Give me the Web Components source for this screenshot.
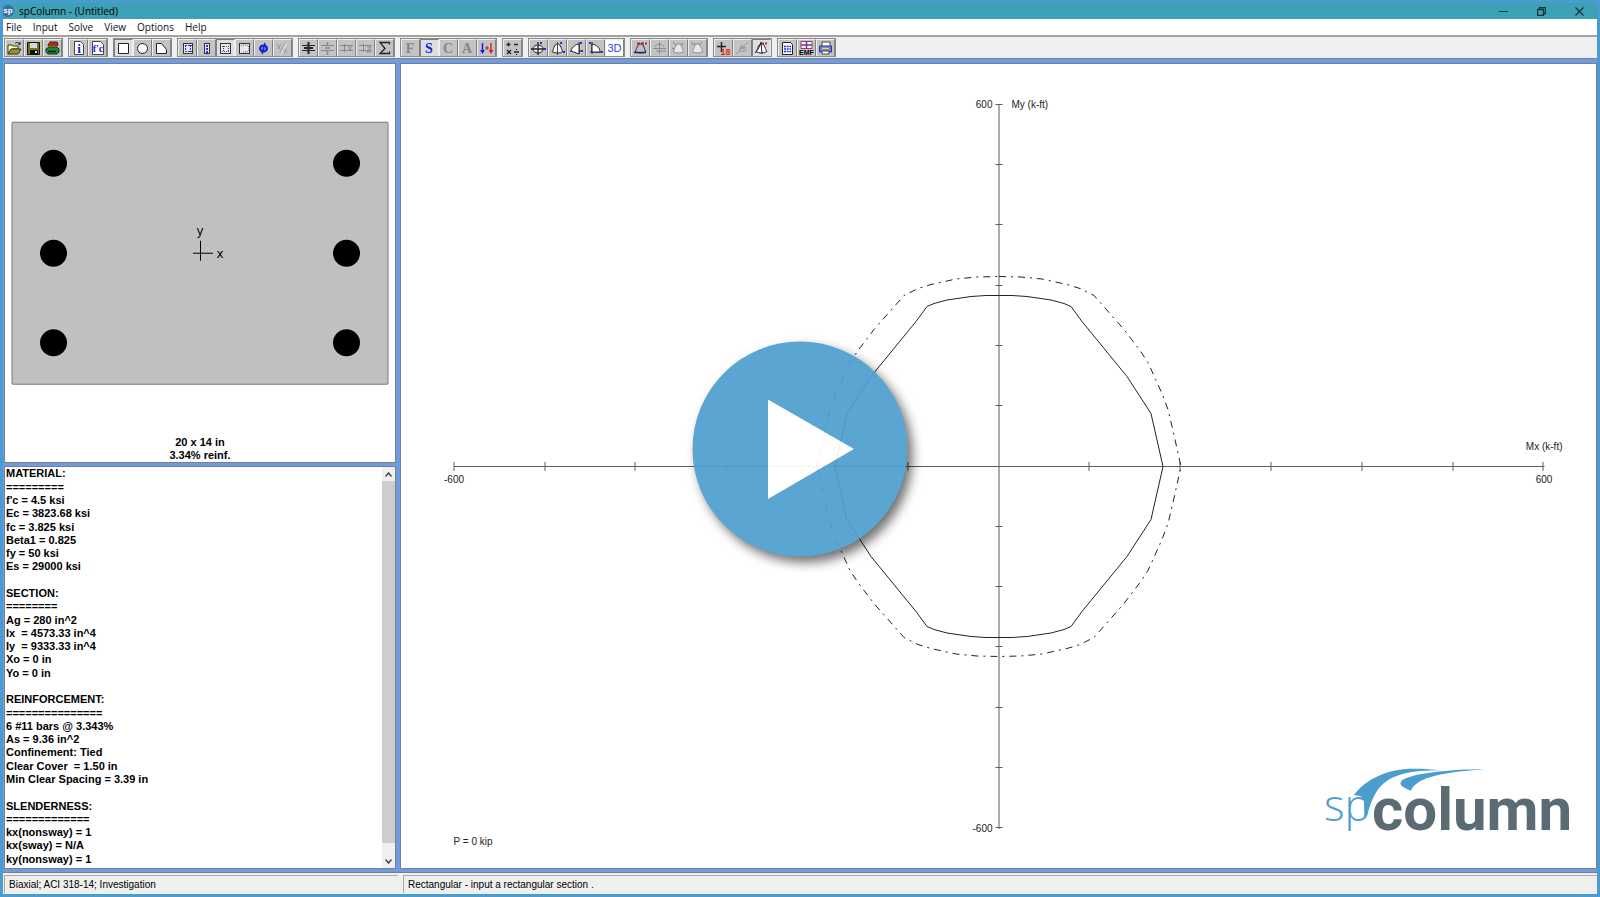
<!DOCTYPE html>
<html lang="en">
<head>
<meta charset="utf-8">
<title>spColumn - (Untitled)</title>
<style>
  html, body { margin: 0; height: 100%; }
  body { font: 11px/13px "Liberation Sans", Arial, sans-serif; color: #000; }
</style>
</head>
<body>
<app-window></app-window>
<script>
function define(name, html, setup) {
  const template = document.createElement('template');
  template.innerHTML = html;
  customElements.define(name, class extends HTMLElement {
    constructor() {
      super();
      this.attachShadow({ mode: 'open' }).append(template.content.cloneNode(true));
    }
    connectedCallback() {
      if (setup && !this.ready) { this.ready = true; setup(this, this.shadowRoot); }
    }
  });
}

/* ---------- toolbar icons, 15 x 14 units each ---------- */
const page = '<path d="M3.500 .5h6l3 3v10h-9z" fill="#fff" stroke="#445"/>';
const section = (x, w, dots) => `<rect x="${x}.5" y="2.500" width="${w}" height="10" fill="#e8e8f2" stroke="#333"/>` + dots;
const dot = (x, y) => `<path d="M${x} ${y}h2v2h-2z" fill="#2430d0"/>`;
const bell = (c, f) => `<path d="M2 10.500C4 9 3.500 3 7.500 3C11.500 3 11 9 13 10.500C11 12.500 4 12.500 2 10.500Z" fill="${f}" stroke="${c}"/>`;
const letter = (t, c) => `<text x="7" y="12" text-anchor="middle" font-family="Liberation Serif, serif" font-weight="700" font-size="14" fill="${c}">${t}</text>`;
const rows = (c, v, w) => `<path d="M1 4.500h13M1 9.500h13" stroke="${c}"/><path d="${v}" stroke="${c}" stroke-width="${w}" fill="none"/>`;
const icons = {
  open: '<path d="M1 4h4l1 1h5v3H5l-4 5z" fill="#ffff9a" stroke="#333"/><path d="M1 13l3-5h10l-3 5z" fill="#9a9418" stroke="#333"/><path d="M8 2.500c2-2 4-1 5 1l-2-.5m2 .5V1" fill="none" stroke="#222"/>',
  save: '<path d="M1.500 1.500h12v12h-12z" fill="#77751c" stroke="#111"/><path d="M4 2h7v5H4z" fill="#d8d8d8"/><path d="M4 9h8v4H4z" fill="#111"/><path d="M9 10h2v2H9z" fill="#ddd"/>',
  report: '<path d="M3 4l2-3h7l1 3-2 2H4z" fill="#b32822" stroke="#421"/><path d="M3 5h9l-1 3H4z" fill="#e0b02c"/><path d="M1 8l3-2h8l2 2v3l-2 2H3l-2-2z" fill="#178b33" stroke="#132"/><path d="M3 10.500h8" stroke="#111" stroke-width="1.500"/>',
  info: page + '<text x="8" y="12" text-anchor="middle" font-family="Liberation Serif, serif" font-weight="700" font-size="13" fill="#1522c8">i</text>',
  fc: '<path d="M2.500 .5h8l3 3v10h-11z" fill="#fff" stroke="#445"/><text x="8" y="11" text-anchor="middle" font-family="Liberation Serif, serif" font-weight="700" font-size="10" fill="#1522e8">f\'c</text>',
  rect: '<path d="M2.500 2.500h10v10h-10z" fill="#fff" stroke="#222"/>',
  circle: '<circle cx="7.500" cy="7.500" r="5" fill="#fff" stroke="#222"/>',
  shape: '<path d="M2.500 2.500h5l5 6v4h-10z" fill="#fff" stroke="#222"/>',
  bars: section(3, 9, '<path d="M5 4.500h7M5 10.500h7M5.500 4v7M10.500 4v7" stroke="#2430d0" stroke-dasharray="2 1"/>'),
  barsNarrow: section(5, 5, '<path d="M8 4v8" stroke="#2430d0" stroke-width="2" stroke-dasharray="2 1"/>'),
  barsSides: section(2, 10, '<path d="M4 5.500h8M4 10.500h8" stroke="#556" stroke-dasharray="1 1"/><path d="M5.500 5v6M10.500 5v6" stroke="#2430b0" stroke-dasharray="1 1"/>'),
  barsIrregular: section(2, 10, '<path d="M4 5l2-1h4l2 2v3l-2 2H5" fill="none" stroke="#556" stroke-dasharray="1 1"/>'),
  phi: '<ellipse cx="7.500" cy="7.500" rx="3.500" ry="3" fill="#7788f0" stroke="#1522c8" stroke-width="2"/><path d="M9 2L6 13" stroke="#1522c8" stroke-width="1.500"/>',
  percent: '<path d="M10 2L5 12M2 3l3 5M3 8l3-5M9 8l3 4M9 12l3-4" stroke="#999"/><path d="M11 3L6 13" stroke="#eee"/>',
  col1: rows('#222', 'M7.500 1v12M3 7h9', 2),
  col2: rows('#888', 'M7.500 1v3M7.500 10v4M5 7h5', 1.5),
  col3: rows('#888', 'M5.500 3v8M9 5l4 5M13 5l-4 5', 1),
  col4: rows('#888', 'M5.500 3v8M9 6h4l-4 5h4', 1),
  sum: '<path d="M12.500 3.500V1.500H3l5 6-5 5h9.500v-2" fill="none" stroke="#222" stroke-width="1.300"/>',
  F: letter('F', '#858585'), S: letter('S', '#1420f0'), C: letter('C', '#858585'), A: letter('A', '#858585'),
  loads: '<path d="M3.500 2v9" stroke="#1420f0" stroke-width="1.500"/><path d="M1 9h5l-2.500 4z" fill="#1420f0"/><path d="M12 2v9" stroke="#e02020" stroke-width="1.500"/><path d="M9.500 9h5L12 13z" fill="#e02020"/><path d="M6 7h4M8 5v4" stroke="#a22"/>',
  calc: '<path d="M1.500 3.500h4M3.500 1.500v4M9 3.500h4M2 9l4 4M6 9l-4 4M9 11h5" stroke="#222" stroke-width="1.300"/><path d="M11 8h1v1h-1zM11 13h1v1h-1z"/>',
  surfH: '<ellipse cx="7" cy="8" rx="5" ry="4" fill="#eee" stroke="#222"/><path d="M7 1v13M0 8h13" stroke="#222" stroke-width="1.300"/>' + dot(9,1) + dot(13,7),
  surf1: bell('#222', '#f4f4f4') + '<path d="M7.500 1v13" stroke="#444"/>' + dot(10,1) + dot(13,10),
  surf2: '<path d="M10 1v12M1 10h11" stroke="#222"/><path d="M10 3C7 3 3 6 2 10l8 3z" fill="#fff" stroke="#222"/>' + dot(11,1) + dot(12,9),
  surf3: '<path d="M4 1v12M2 11h12" stroke="#222"/><path d="M4 3c5 1 8 4 8 8H4z" fill="#fff" stroke="#222"/>' + dot(1,1) + dot(13,10),
  three: '<text x="7.500" y="11" text-anchor="middle" font-size="11" fill="#3a40e0">3D</text>',
  cut1: bell('#224', '#b9bde0') + '<path d="M1 11.500h12" stroke="#233" stroke-width="1.500"/><path d="M4 2.500h10" stroke="#b22" stroke-width="2" stroke-dasharray="3 1"/>',
  cut2: '<path d="M3 6c1-4 8-4 9 0M1 7.500h13M7.500 1v12M4 10h10" fill="none" stroke="#8a8a8a"/>',
  cut3: bell('#8a8a8a', '#e8e8e8') + '<path d="M2 1l3 3M9 3h4M1 7l3 1" stroke="#8a8a8a"/>',
  cut4: bell('#8a8a8a', '#e8e8e8') + '<path d="M12 1L9 4M2 3h4M1 1l2 2" stroke="#8a8a8a"/>',
  plus18: '<path d="M5.500 1v10M1 5.500h9" stroke="#222" stroke-width="1.500"/><text x="9.500" y="14" text-anchor="middle" font-size="9" font-weight="700" fill="#e02818">18</text>',
  fs: '<path d="M1 13L13 1" stroke="#999"/><text x="8" y="11" text-anchor="middle" font-size="9" font-style="italic" fill="#8a8a8a">fs</text>',
  surfR: bell('#223', '#fff') + '<path d="M1 12C4 9 6 5 7 1l1 12" fill="none" stroke="#224"/><path d="M8 2.500h6" stroke="#b22" stroke-width="2" stroke-dasharray="2 1"/>',
  sheet: '<path d="M2.500 1.500h8l2 2v10h-10z" fill="#fff" stroke="#223"/><path d="M4 5.500h7M4 8h7M4 10.500h7" stroke="#2430c0" stroke-width="1.500" stroke-dasharray="2 .7"/>',
  emf: '<path d="M2 .5h11v7H2z" fill="#fff" stroke="#b0307a"/><path d="M7.500 0v8M2 4h11" stroke="#723a90" stroke-width="1.500"/><text x="7.500" y="14" text-anchor="middle" font-size="7" font-weight="700">EMF</text>',
  printer: '<path d="M4 1h8v5H4z" fill="#fff" stroke="#445"/><path d="M1.500 5h12v6h-12z" fill="#6c7ce0" stroke="#223a90"/><path d="M4 7.500h7" stroke="#f0d040" stroke-width="1.500"/><path d="M4 10h7v3H4z" fill="#fff" stroke="#445"/>'
};

define('tool-button', `
<style>
  :host { display: block; }
  button { display: block; box-sizing: border-box; width: 19px; height: 18px; margin: 0; padding: 1px;
    background: #c3c3c3; border: 1px solid; border-color: #eee #808080 #808080 #eee; }
  :host([on]) button { background: #dedede; border-color: #808080 #eee #eee #808080; }
  :host([lit]) button { background: #fff; }
  svg { display: block; width: 15px; height: 14px; overflow: visible; }
</style>
<button type="button"><svg viewBox="0 0 15 14" aria-hidden="true"></svg></button>`,
(host, root) => {
  root.querySelector('svg').innerHTML = icons[host.getAttribute('icon')];
  root.querySelector('button').setAttribute('aria-label', host.getAttribute('label') || host.getAttribute('icon'));
});

define('tool-group', `
<style>:host { display: flex; outline: 1px solid #8a8a8a; }</style><slot></slot>`);

define('tool-bar', `
<style>
  :host { display: flex; gap: 7px; height: 22px; box-sizing: border-box; padding: 2px; background: #efefef;
    border-bottom: 1px solid #777f8c; }
</style>`,
(host, root) => {
  const groups = ['open save report', 'info fc', 'rect+ circle shape', 'bars barsNarrow barsSides+ barsIrregular phi percent',
    'col1 col2 col3 col4 sum', 'F S+ C A loads', 'calc', 'surfH surf1 surf2 surf3 three*', 'cut1 cut2 cut3 cut4',
    'plus18 fs surfR+', 'sheet emf printer'];
  for (const g of groups) {
    const group = document.createElement('tool-group');
    for (const item of g.split(' ')) {
      const b = document.createElement('tool-button');
      b.setAttribute('icon', item.replace(/[+*]/, ''));
      if (item.endsWith('+')) b.setAttribute('on', '');
      if (item.endsWith('*')) b.setAttribute('lit', '');
      group.append(b);
    }
    root.append(group);
  }
});

define('title-bar', `
<style>
  :host { display: flex; align-items: center; height: 16px; background: #3da1b5; font: 10px/14px "Open Sans", sans-serif; }
  .mark { width: 12px; height: 12px; margin-right: 4px; }
  h1 { flex: 1; margin: 0; font: inherit; }
  nav { display: flex; gap: 2px; }
  button { display: grid; place-items: center; width: 36px; height: 14px; padding: 0; border: 0; background: none; }
  button svg { width: 9px; height: 9px; fill: none; stroke: #12323c; }
</style>
<svg class="mark" viewBox="0 0 12 12" aria-hidden="true"><circle cx="5" cy="6" r="6" fill="#3c6ca0"/><text x="5" y="8" text-anchor="middle" font-family="Liberation Sans" font-size="8" font-weight="700" fill="#fff">sp</text></svg>
<h1>spColumn - (Untitled)</h1>
<nav>
  <button type="button" aria-label="Minimize"><svg viewBox="0 0 9 9"><path d="M0 4.500h9"/></svg></button>
  <button type="button" aria-label="Restore"><svg viewBox="0 0 9 9"><path d="M.5 2.500h6v6h-6zM2.500 2V.5h6v6H7" stroke-width="1.300"/></svg></button>
  <button type="button" aria-label="Close"><svg viewBox="0 0 9 9"><path d="M.5.5l8 8M8.500.5l-8 8" stroke-width="1.200"/></svg></button>
</nav>`);

define('menu-bar', `
<style>
  :host { display: flex; gap: 11px; align-items: center; height: 18px; box-sizing: border-box; padding: 0 3px;
    background: #fff; border-bottom: 2px solid #a3a3a3; }
  button { padding: 0; border: 0; background: none; color: #111; font: 10px/14px "Open Sans", sans-serif; }
</style>
<button type="button">File</button><button type="button">Input</button><button type="button">Solve</button>
<button type="button">View</button><button type="button">Options</button><button type="button">Help</button>`);

define('section-view', `
<style>
  :host { display: flex; flex-direction: column; min-height: 0; background: #fff; }
  svg { flex: 1; width: 100%; min-height: 0; }
  p { margin: 0; text-align: center; font-weight: 700; }
</style>
<svg viewBox="5 64 390 371" role="img" aria-label="Column section">
  <rect x="12" y="121.500" width="376" height="262" rx="1" fill="#c0c0c0" stroke="#777"/>
  <g><circle cx="53.500" cy="162.500" r="13.500"/><circle cx="53.500" cy="252.500" r="13.500"/><circle cx="53.500" cy="342" r="13.500"/>
  <circle cx="346.500" cy="162.500" r="13.500"/><circle cx="346.500" cy="252.500" r="13.500"/><circle cx="346.500" cy="342" r="13.500"/></g>
  <path d="M200.500 240v20M193 252.500h20" stroke="#000" fill="none"/>
  <g font-family="DejaVu Sans, sans-serif" font-size="12" text-anchor="middle"><text x="200" y="234">y</text><text x="220" y="257">x</text></g>
</svg>
<p>20 x 14 in</p><p>3.34% reinf.</p>`);

define('report-panel', `
<style>
  :host { display: flex; min-height: 0; background: #fff; }
  .lines { flex: 1; min-width: 0; display: flex; flex-direction: column; justify-content: space-between; padding: 0 1px 2px; overflow: hidden; }
  p { margin: 0; height: 13px; font-weight: 700; white-space: pre; flex: none; }
  .scroll { width: 13px; display: flex; flex-direction: column; background: #f0f0f0; }
  button { display: grid; place-items: center; height: 14px; padding: 0; border: 0; background: #f0f0f0; }
  svg { width: 7px; height: 5px; fill: none; stroke: #444; stroke-width: 1.500; }
  .thumb { flex: 1; margin-bottom: 11px; background: #cdcdcd; }
</style>
<div class="lines"></div>
<div class="scroll">
  <button type="button" aria-label="Scroll up"><svg viewBox="0 0 7 5"><path d="M.5 4.500l3-3.500 3 3.500"/></svg></button>
  <div class="thumb"></div>
  <button type="button" aria-label="Scroll down"><svg viewBox="0 0 7 5"><path d="M.5.5l3 3.500 3-3.500"/></svg></button>
</div>`,
(host, root) => {
  const lines = ['MATERIAL:', '=========', "f'c = 4.5 ksi", 'Ec = 3823.68 ksi', 'fc = 3.825 ksi', 'Beta1 = 0.825', 'fy = 50 ksi',
    'Es = 29000 ksi', '', 'SECTION:', '========', 'Ag = 280 in^2', 'Ix  = 4573.33 in^4', 'Iy  = 9333.33 in^4', 'Xo = 0 in', 'Yo = 0 in', '',
    'REINFORCEMENT:', '===============', '6 #11 bars @ 3.343%', 'As = 9.36 in^2', 'Confinement: Tied', 'Clear Cover  = 1.50 in',
    'Min Clear Spacing = 3.39 in', '', 'SLENDERNESS:', '=============', 'kx(nonsway) = 1', 'kx(sway) = N/A', 'ky(nonsway) = 1'];
  const box = root.querySelector('.lines');
  for (const line of lines) {
    const p = document.createElement('p');
    p.textContent = line;
    box.append(p);
  }
});

define('sp-logo', `
<style>:host { display: block; width: 256px; height: 90px; } svg { display: block; width: 100%; height: 100%; }</style>
<svg viewBox="0 0 256 90">
  <g transform="translate(-23 -26) scale(.33333)" fill="#4a9dce">
    <path d="M158 166C195 115 265 84 345 86C370 86 395 88 418 91C345 90 285 100 250 128C220 152 210 190 196 228L190 228L189 185C189 172 178 166 158 166Z"/>
    <path d="M330 152C345 118 400 98 550 88C450 88 350 98 308 118C290 128 298 142 330 152Z"/>
  </g>
  <text x="0" y="55" font-family="Open Sans, sans-serif" font-weight="300" font-size="44" fill="#4a9dce">sp</text>
  <text x="48" y="64" font-family="Roboto, sans-serif" font-weight="700" font-size="60" fill="#5b6b74">column</text>
</svg>`);

define('diagram-view', `
<style>
  :host { display: block; position: relative; min-height: 0; min-width: 0; background: #fff; }
  .plot { display: block; width: 100%; height: 100%; }
  sp-logo { position: absolute; right: 16px; bottom: 12px; }
  text { font-size: 10px; fill: #222; }
</style>
<svg class="plot" viewBox="401 64 1194 804" role="img" aria-label="Moment interaction diagram at P = 0 kip">
  <g class="axes" fill="none" stroke="#5c5c5c"></g>
  <g class="curves" fill="none" stroke="#222"></g>
  <text x="992" y="108" text-anchor="end">600</text><text x="1011" y="108">My (k-ft)</text>
  <text x="992" y="832" text-anchor="end">-600</text><text x="453.500" y="483" text-anchor="middle">-600</text>
  <text x="1543.500" y="483" text-anchor="middle">600</text><text x="1562" y="450" text-anchor="end">Mx (k-ft)</text>
  <text x="453" y="845">P = 0 kip</text>
</svg>
<sp-logo></sp-logo>`,
(host, root) => {
  const cx = 998.5, cy = 466.5;
  let axes = `M453.5 ${cy}H1544M${cx} 104V829`;
  for (let i = -6; i <= 6; i++) {
    if (!i) continue;
    axes += `M${Math.round(cx + i * 90.8) - .5} 462v9M995 ${Math.round(cy + i * 60.3) - .5}h7`;
  }
  root.querySelector('.axes').innerHTML = `<path d="${axes}"/>`;
  /* first quadrant, as offsets from the origin; the other three mirror it */
  const ring = q => {
    const tr = (sx, sy) => q.map(([x, y]) => [cx + sx * x, cy - sy * y]);
    const pts = [...tr(1, 1), ...tr(1, -1).reverse(), ...tr(-1, -1), ...tr(-1, 1).reverse()];
    return 'M' + pts.map(p => p.join(' ')).join('L') + 'Z';
  };
  const design = [[0, 171], [13, 171], [28, 170], [52, 166.5], [65, 163], [72, 160], [83, 145], [128, 90], [152, 53], [164, 0]];
  const nominal = [[0, 190], [22, 189.5], [43, 187.5], [68, 182], [81, 178], [95, 171], [125, 137], [141, 116], [149, 104], [163, 73], [169, 57], [174, 36], [182, 0]];
  root.querySelector('.curves').innerHTML = `<path d="${ring(design)}"/><path d="${ring(nominal)}" stroke-dasharray="7 5 2 5"/>`;
});

define('status-bar', `
<style>
  :host { display: grid; grid-template-columns: 394px 1fr; gap: 5px; height: 22px; box-sizing: border-box; padding: 2px 0 1px 1px;
    background: #efefef; border-top: 1px solid #777f8c; font-size: 10px; line-height: 17px; }
  span { padding: 0 4px; border-top: 1px solid #aaa; border-left: 1px solid #aaa; white-space: nowrap; overflow: hidden; }
</style>
<span>Biaxial; ACI 318-14; Investigation</span><span>Rectangular - input a rectangular section .</span>`);

define('play-button', `
<style>
  :host { display: block; width: 215px; height: 215px; }
  button { display: block; width: 100%; height: 100%; padding: 0; border: 0; border-radius: 50%; background: #4f9fcf; opacity: .93;
    box-shadow: 5px 6px 11px rgba(0, 0, 0, .6); }
  svg { display: block; width: 100%; height: 100%; }
</style>
<button type="button" aria-label="Play video"><svg viewBox="0 0 215 215"><path d="M75.500 58L161.500 107.500L75.500 157.500Z" fill="#fff"/></svg></button>`);

define('app-window', `
<style>
  :host { display: flex; flex-direction: column; position: relative; height: 100vh; box-sizing: border-box; border: 3px solid #4a9cd0; }
  .work { flex: 1; min-height: 0; display: grid; grid-template-columns: 392px minmax(0, 1fr); gap: 4px; padding: 4px 0 3px 1px; background: #6f9be3; }
  .left { display: grid; grid-template-rows: minmax(0, 400fr) minmax(0, 402fr); gap: 3px; min-height: 0; }
  section-view, report-panel, diagram-view { border: 1px solid #777f8c; }
  play-button { position: absolute; left: 50%; top: 50%; transform: translate(-50%, -50%); }
</style>
<title-bar></title-bar>
<menu-bar></menu-bar>
<tool-bar></tool-bar>
<main class="work">
  <div class="left"><section-view></section-view><report-panel></report-panel></div>
  <diagram-view></diagram-view>
</main>
<status-bar></status-bar>
<play-button></play-button>`);
</script>
</body>
</html>
